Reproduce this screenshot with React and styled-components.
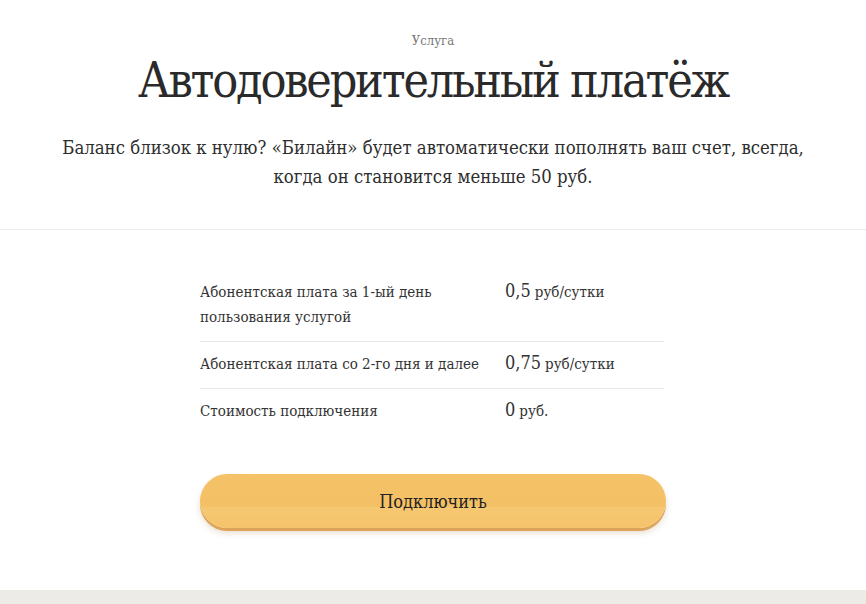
import styled, { createGlobalStyle } from 'styled-components';

const GlobalStyle = createGlobalStyle`
  html, body {
    margin: 0;
    padding: 0;
    background: #ffffff;
  }
  body {
    font-family: "DejaVu Serif Condensed", "DejaVu Serif", serif;
    color: #282828;
  }
`;

const Page = styled.div`
  width: 866px;
  min-height: 604px;
  display: flex;
  flex-direction: column;
`;

const Hero = styled.header`
  display: flex;
  flex-direction: column;
  align-items: center;
  padding-top: 32px;
  height: 197px;
  border-bottom: 1px solid #ececec;
  text-align: center;
`;

const Kicker = styled.div`
  font-size: 13px;
  color: #777;
  line-height: 18px;
`;

const Title = styled.h1`
  margin: 0;
  font-weight: normal;
  font-size: 48px;
  line-height: 60px;
  letter-spacing: -2.2px;
  color: #2a2a2a;
`;

const Lead = styled.p`
  margin: 23px 0 0;
  font-size: 18.4px;
  line-height: 29px;
  color: #2e2e2e;
`;

const Body = styled.main`
  flex: 1;
  display: flex;
  flex-direction: column;
  align-items: center;
  padding-top: 42px;
`;

const Table = styled.div`
  width: 464px;
  margin-left: -2px;
  display: flex;
  flex-direction: column;
`;

const Row = styled.div`
  display: grid;
  grid-template-columns: 305px 1fr;
  padding: ${p => (p.$first ? '8px' : '10px')} 0 11px;
  border-bottom: ${p => (p.$last ? 'none' : '1px solid #e8e8e8')};
`;

const Label = styled.div`
  font-size: 15px;
  line-height: 25px;
  color: #333;
`;

const Price = styled.div`
  font-size: 15px;
  line-height: 25px;
  color: #333;

  b {
    font-weight: normal;
    font-size: 18px;
    line-height: 1;
    margin-right: 4px;
  }
`;

const Button = styled.button`
  margin-top: 39px;
  width: 466px;
  height: 54px;
  border: none;
  border-radius: 27px;
  background: linear-gradient(#f5c268 0%, #f4c065 60%, #f6c772 62%, #f5c36a 100%);
  box-shadow: 0 3px 0 #dda35a, 0 5px 6px rgba(160, 120, 60, 0.25);
  font-family: inherit;
  font-size: 18px;
  color: #222;
  cursor: pointer;
`;

const Footer = styled.footer`
  height: 14px;
  background: #edebe8;
`;

const fees = [
  { label: 'Абонентская плата за 1-ый день пользования услугой', value: '0,5', unit: 'руб/сутки' },
  { label: 'Абонентская плата со 2-го дня и далее', value: '0,75', unit: 'руб/сутки' },
  { label: 'Стоимость подключения', value: '0', unit: 'руб.' },
];

export default function App() {
  return (
    <Page>
      <GlobalStyle />
      <Hero>
        <Kicker>Услуга</Kicker>
        <Title>Автодоверительный платёж</Title>
        <Lead>
          Баланс близок к нулю? «Билайн» будет автоматически пополнять ваш счет, всегда,
          <br />
          когда он становится меньше 50 руб.
        </Lead>
      </Hero>
      <Body>
        <Table>
          {fees.map((f, i) => (
            <Row key={f.label} $first={i === 0} $last={i === fees.length - 1}>
              <Label>{i === 0 ? <>Абонентская плата за 1-ый день<br />пользования услугой</> : f.label}</Label>
              <Price>
                <b>{f.value}</b>
                {f.unit}
              </Price>
            </Row>
          ))}
        </Table>
        <Button>Подключить</Button>
      </Body>
      <Footer />
    </Page>
  );
}
